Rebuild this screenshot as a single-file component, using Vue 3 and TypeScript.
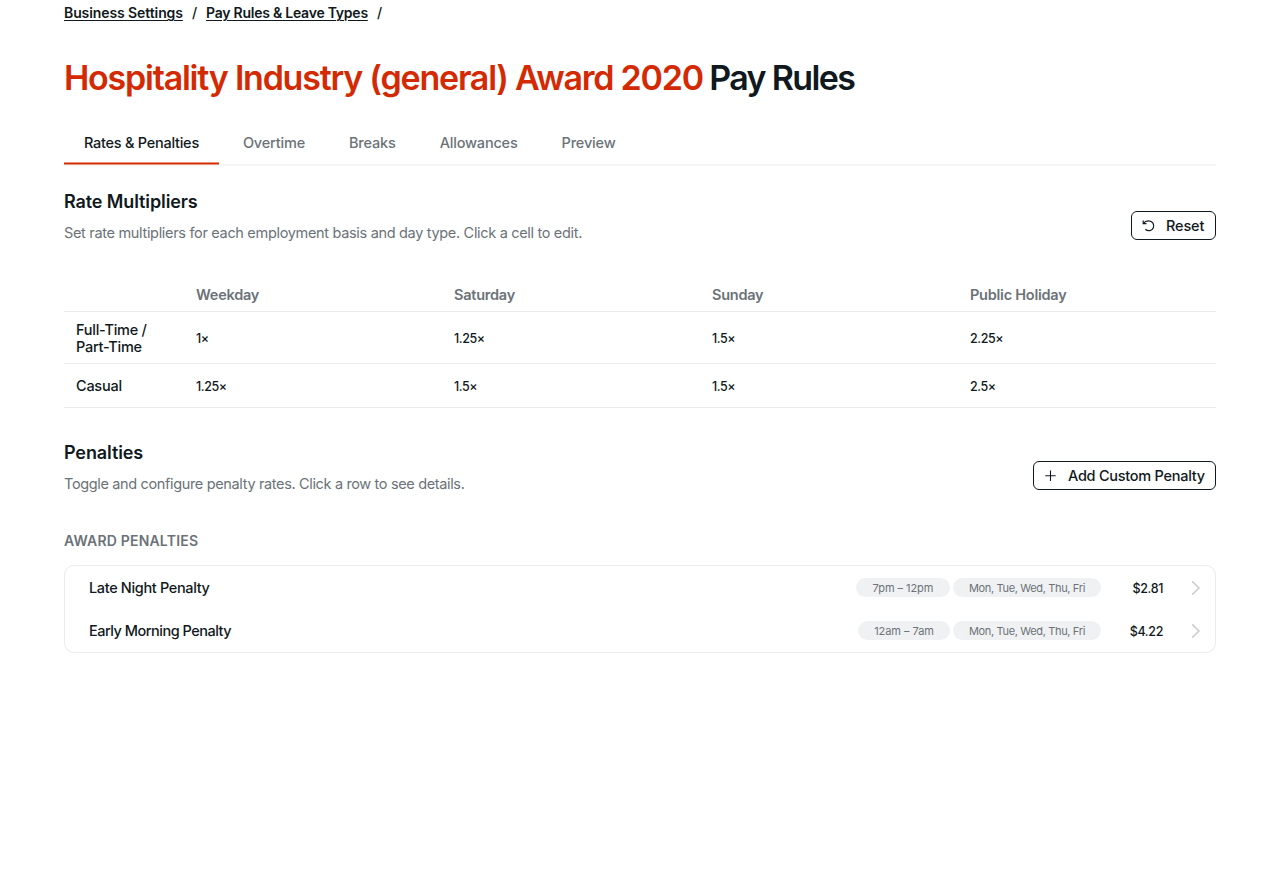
<script setup lang="ts">
interface RateRow {
  basis: string
  rates: string[]
}
interface Penalty {
  name: string
  hours: string
  days: string
  amount: string
}

const tabs: string[] = ['Rates & Penalties', 'Overtime', 'Breaks', 'Allowances', 'Preview']
const dayTypes: string[] = ['Weekday', 'Saturday', 'Sunday', 'Public Holiday']
const rateRows: RateRow[] = [
  { basis: 'Full-Time / Part-Time', rates: ['1×', '1.25×', '1.5×', '2.25×'] },
  { basis: 'Casual', rates: ['1.25×', '1.5×', '1.5×', '2.5×'] },
]
const penalties: Penalty[] = [
  { name: 'Late Night Penalty', hours: '7pm – 12pm', days: 'Mon, Tue, Wed, Thu, Fri', amount: '$2.81' },
  { name: 'Early Morning Penalty', hours: '12am – 7am', days: 'Mon, Tue, Wed, Thu, Fri', amount: '$4.22' },
]
</script>

<template>
  <main class="page">
    <nav class="crumbs">
      <span class="crumb c1"><a>Business Settings</a></span><span class="slash">/</span>
      <span class="crumb c2"><a>Pay Rules &amp; Leave Types</a></span><span class="slash">/</span>
    </nav>

    <h1 class="title"><span class="award">Hospitality Industry (general) Award 2020</span> <span class="suffix">Pay Rules</span></h1>

    <div class="tabs">
      <button v-for="(tab, i) in tabs" :key="tab" class="tab" :class="{ active: i === 0 }">{{ tab }}</button>
    </div>

    <section class="head rates-head">
      <div>
        <h2 class="h2">Rate Multipliers</h2>
        <p class="desc d1">Set rate multipliers for each employment basis and day type. Click a cell to edit.</p>
      </div>
      <button class="btn reset">
        <svg width="14" height="14" viewBox="0 0 14 14" fill="none" stroke="currentColor" stroke-width="1.2">
          <path d="M1.2 1.4v3.2h3.3" />
          <path d="M1.3 4.5C2.6 2.7 4.7 1.7 6.9 1.9a4.9 4.9 0 1 1-3.5 8.4" />
        </svg>
        <span>Reset</span>
      </button>
    </section>

    <table class="rates">
      <thead>
        <tr>
          <th class="basis"></th>
          <th v-for="day in dayTypes" :key="day">{{ day }}</th>
        </tr>
      </thead>
      <tbody>
        <tr v-for="row in rateRows" :key="row.basis">
          <td class="basis">{{ row.basis }}</td>
          <td v-for="(rate, i) in row.rates" :key="i" class="rate">{{ rate }}</td>
        </tr>
      </tbody>
    </table>

    <section class="head pen-head">
      <div>
        <h2 class="h2">Penalties</h2>
        <p class="desc">Toggle and configure penalty rates. Click a row to see details.</p>
      </div>
      <button class="btn add">
        <svg width="12" height="12" viewBox="0 0 12 12" fill="none" stroke="currentColor" stroke-width="1.1">
          <path d="M5.5 .5v10.4M.3 5.7h10.4" />
        </svg>
        <span>Add Custom Penalty</span>
      </button>
    </section>

    <h3 class="group">AWARD PENALTIES</h3>
    <div class="card">
      <div v-for="p in penalties" :key="p.name" class="row">
        <span class="name">{{ p.name }}</span>
        <span class="pill hours">{{ p.hours }}</span>
        <span class="pill days">{{ p.days }}</span>
        <span class="amount">{{ p.amount }}</span>
        <svg class="chev" width="10" height="16" viewBox="0 0 10 16" fill="none" stroke="currentColor" stroke-width="1.7">
          <path d="M1.2 1.3 7.9 8l-6.7 6.7" />
        </svg>
      </div>
    </div>
  </main>
</template>

<style>
html, body { background: #fff; }
</style>

<style scoped>
.page {
  box-sizing: border-box;
  height: 872px;
  padding: 0 64px;
  overflow: hidden;
  font-family: Inter, "Liberation Sans", sans-serif;
  font-size: 14.5px;
  font-weight: 500;
  letter-spacing: -0.35px;
  color: #101820;
}
button {
  margin: 0;
  font: inherit;
  letter-spacing: inherit;
  color: inherit;
  background: none;
  border: 0;
}
h1, h2, h3, p { margin: 0; }
.crumbs {
  display: flex;
  height: 26px;
  line-height: 26px;
  font-size: 14px;
  font-weight: 600;
  white-space: nowrap;
}
.crumb a { text-decoration: underline; text-decoration-thickness: 1px; text-underline-offset: 2px; }
.crumb.c1 { width: 119px; letter-spacing: -0.09px; }
.crumb.c2 { width: 162px; letter-spacing: -0.24px; }
.slash { width: 23px; padding-left: 9px; box-sizing: border-box; font-weight: 500; }
.title {
  height: 44px;
  margin-top: 30px;
  line-height: 44px;
  font-size: 34px;
  font-weight: 600;
  letter-spacing: -1.23px;
  white-space: nowrap;
}
.award { color: #d42a04; }
.suffix { letter-spacing: -1.65px; margin-left: -1px; }
.tabs {
  display: flex;
  gap: 4px;
  height: 63px;
  margin-top: 1px;
  border-bottom: 2px solid #f5f5f6;
}
.tab {
  position: relative;
  padding: 20px 20px 0;
  height: 64px;
  line-height: 44px;
  color: #6b7278;
  letter-spacing: -0.18px;
}
.tab.active { color: #101820; letter-spacing: -0.26px; }
.tab.active::after {
  content: "";
  position: absolute;
  left: 0;
  right: 0;
  bottom: 0;
  height: 3px;
  background: linear-gradient(#e9947f 1px, #d42a04 1px 2px, #e9947f 2px);
}
.head { display: flex; justify-content: space-between; align-items: flex-start; }
.rates-head { margin-top: 22px; height: 90px; }
.h2 { font-size: 18px; line-height: 28px; font-weight: 600; letter-spacing: -0.11px; }
.desc { margin-top: 6px; line-height: 22px; font-weight: 400; color: #6b7278; white-space: nowrap; }
.desc.d1 { letter-spacing: -0.32px; }
.btn {
  box-sizing: border-box;
  display: flex;
  align-items: center;
  height: 29px;
  margin-top: 23px;
  border: 1px solid #101820;
  border-radius: 6px;
  white-space: nowrap;
}
.btn.reset { width: 85px; padding: 0 0 0 10px; gap: 10px; letter-spacing: -0.15px; }
.btn.add { width: 183px; margin-top: 22px; padding: 0 0 0 11px; gap: 11px; letter-spacing: -0.26px; }
.rates { width: 100%; border-collapse: collapse; table-layout: fixed; }
.rates th, .rates td { padding: 0 12px; text-align: left; border-bottom: 1px solid #ebebec; }
.rates th { height: 33px; font-weight: 600; color: #6b7278; letter-spacing: -0.24px; }
.rates .basis { width: 96px; line-height: 17px; letter-spacing: -0.25px; }
.rates tbody tr { height: 52px; }
.rates tbody tr:last-child { height: 44px; }
.rates .rate { font-size: 12.5px; padding-top: 1px; letter-spacing: -0.4px; }
.pen-head { margin-top: 31px; height: 92px; }
.group { font-size: 14px; line-height: 20px; font-weight: 600; color: #6b7278; letter-spacing: 0.2px; }
.card { margin-top: 14px; border: 1px solid #ebebec; border-radius: 10px; }
.row { display: flex; align-items: center; height: 43px; padding: 0 14px 0 24px; }
.name { flex: 1; }
.row:last-child .name { letter-spacing: -0.5px; }
.pill {
  box-sizing: border-box;
  height: 19px;
  margin-right: 3px;
  border-radius: 10px;
  background: #f0f1f3;
  color: #6b7278;
  font-size: 11px;
  line-height: 20px;
  font-weight: 400;
  text-align: center;
  white-space: nowrap;
}
.hours { width: 94px; letter-spacing: -0.05px; }
.row:last-child .hours { width: 92px; }
.days { margin-right: 0; width: 148px; }
.amount { width: 62px; padding-top: 2px; text-align: right; font-size: 12.5px; }
.chev { margin-left: 28px; color: #cfcfd1; }
</style>
